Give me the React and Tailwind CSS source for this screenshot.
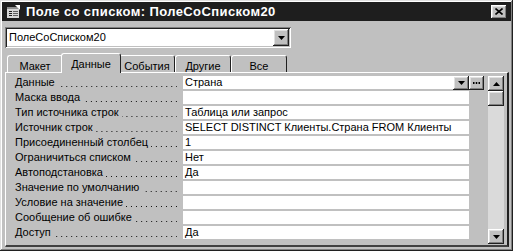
import React from 'react';

const rows = [
  ['Данные', 'Страна'],
  ['Маска ввода', ''],
  ['Тип источника строк', 'Таблица или запрос'],
  ['Источник строк', 'SELECT DISTINCT Клиенты.Страна FROM Клиенты'],
  ['Присоединенный столбец', '1'],
  ['Ограничиться списком', 'Нет'],
  ['Автоподстановка', 'Да'],
  ['Значение по умолчанию', ''],
  ['Условие на значение', ''],
  ['Сообщение об ошибке', ''],
  ['Доступ', 'Да'],
];

const tabs = ['Макет', 'Данные', 'События', 'Другие', 'Все'];

function Arrow({ up }) {
  return (
    <svg width="7" height="4" viewBox="0 0 7 4">
      {up ? <path d="M3.5 0 L7 4 L0 4 Z" fill="#000" /> : <path d="M0 0 L7 0 L3.5 4 Z" fill="#000" />}
    </svg>
  );
}

function Btn({ className = '', children }) {
  return (
    <div
      className={`flex items-center justify-center bg-[#c0c0c0] shadow-[inset_-1px_-1px_#202020,inset_1px_1px_#ffffff,inset_-2px_-2px_#808080,inset_2px_2px_#e0e0e0] ${className}`}
    >
      {children}
    </div>
  );
}

export default function App() {
  return (
    <div
      className="w-[513px] h-[251px] bg-[#c0c0c0] p-[2px] flex flex-col shadow-[inset_-1px_-1px_#202020,inset_1px_1px_#e0e0e0,inset_-2px_-2px_#808080,inset_2px_2px_#ffffff] text-[11px] text-black"
      style={{ fontFamily: '"Liberation Sans", Arial, sans-serif' }}
    >
      {/* title bar */}
      <div className="h-[19px] bg-[#1e1e1e] flex items-center pl-[4px] pr-[4px]">
        <svg width="15" height="14" viewBox="0 0 15 14" className="mr-[5px]">
          <rect x="1" y="2" width="12" height="11" fill="#d8d8d8" />
          <rect x="1" y="2" width="12" height="2" fill="#909090" />
          <rect x="3" y="6" width="3" height="1" fill="#202020" />
          <rect x="7" y="6" width="5" height="1" fill="#606060" />
          <rect x="3" y="8" width="3" height="1" fill="#202020" />
          <rect x="7" y="8" width="5" height="1" fill="#606060" />
          <rect x="3" y="10" width="3" height="1" fill="#202020" />
          <rect x="7" y="10" width="5" height="1" fill="#606060" />
          <path d="M9 0 L14 0 L14 5 Z" fill="#ffffff" />
        </svg>
        <span className="text-white font-bold text-[13px] tracking-[0.4px]">Поле со списком: ПолеСоСписком20</span>
        <div className="flex-1" />
        <Btn className="w-[16px] h-[14px]">
          <svg width="8" height="7" viewBox="0 0 8 7">
            <path d="M0.5 0.5 L7.5 6.5 M7.5 0.5 L0.5 6.5" stroke="#000" strokeWidth="1.6" />
          </svg>
        </Btn>
      </div>

      {/* combo */}
      <div className="mt-[6px] ml-[3px] w-[286px] h-[21px] bg-white flex items-center shadow-[inset_1px_1px_#808080,inset_-1px_-1px_#ffffff,inset_2px_2px_#202020,inset_-2px_-2px_#c0c0c0] pl-[4px] pr-[2px]">
        <span className="flex-1">ПолеСоСписком20</span>
        <Btn className="w-[16px] h-[17px]">
          <Arrow />
        </Btn>
      </div>

      {/* tabs */}
      <div className="mt-[5px] ml-[3px] flex items-end h-[19px] pl-[2px]">
        {tabs.map((t, i) => {
          const active = i === 1;
          return (
            <div
              key={t}
              className={`flex justify-center rounded-t-[3px] border-t border-l border-r border-t-white border-l-white border-r-[#202020] ${
                active
                  ? 'w-[60px] -mx-[2px] relative z-10 bg-[#c0c0c0] pt-[2px] -mb-[1px] h-[20px]'
                  : 'w-[56px] h-[17px] pt-[2px]'
              }`}
            >
              {t}
            </div>
          );
        })}
      </div>

      {/* panel */}
      <div className="ml-[3px] mr-[2px] flex-1 mb-[2px] border-t border-l border-t-white border-l-white border-r-2 border-b-2 border-r-[#202020] border-b-[#404040] pt-[3px] pl-[3px] flex">
        <div className="flex flex-col w-[475px]">
          {rows.map(([label, value], i) => (
            <div key={label} className="flex h-[15px]">
              <div className="w-[174px] h-[13px] flex items-center pl-[6px] pr-[6px] whitespace-nowrap">
                <span className="shrink-0">{label}</span>
                <div className="flex-1 ml-[3px] self-end mb-[2px] h-[1px] bg-[linear-gradient(to_right,transparent_0px,transparent_4px,#111_4px,#111_5px)] bg-[length:5px_1px] bg-right bg-repeat-x" />
              </div>
              <div
                className={`h-[13px] bg-white flex items-center pl-[2px] whitespace-nowrap ${
                  i === 0 ? 'w-[270px]' : 'w-[286px]'
                }`}
              >
                {value}
              </div>
              {i === 0 && (
                <div className="flex">
                  <Btn className="w-[16px] h-[14px]">
                    <Arrow />
                  </Btn>
                  <Btn className="w-[15px] h-[14px]">
                    <svg width="7" height="2" viewBox="0 0 7 2">
                      <rect x="0" y="0" width="1.5" height="2" fill="#000" />
                      <rect x="2.75" y="0" width="1.5" height="2" fill="#000" />
                      <rect x="5.5" y="0" width="1.5" height="2" fill="#000" />
                    </svg>
                  </Btn>
                </div>
              )}
            </div>
          ))}
        </div>
        <div className="ml-[4px] w-[16px] h-[168px] bg-[#dadada] flex flex-col justify-between">
          <div>
            <Btn className="w-[16px] h-[15px]">
              <Arrow up />
            </Btn>
            <Btn className="w-[16px] h-[15px]" />
          </div>
          <Btn className="w-[16px] h-[15px]">
            <Arrow />
          </Btn>
        </div>
      </div>
    </div>
  );
}
